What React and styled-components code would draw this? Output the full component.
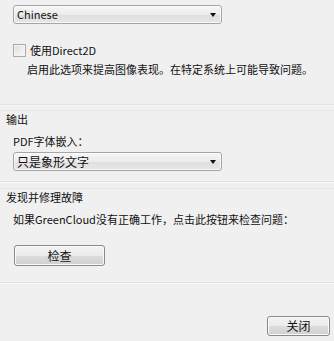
import React from 'react';
import styled, { createGlobalStyle } from 'styled-components';

const GlobalStyle = createGlobalStyle`
  html, body {
    margin: 0;
    padding: 0;
    background: #f0f0f0;
  }
  body {
    font-family: "Noto Sans CJK SC", "Liberation Sans", sans-serif;
    font-size: 11px;
    color: #111;
  }
`;

const Page = styled.div`
  width: 334px;
  height: 341px;
  overflow: hidden;
  background: #f0f0f0;
  display: flex;
  flex-direction: column;
`;

const Section = styled.section`
  display: flex;
  flex-direction: column;
  align-items: flex-start;
  padding: ${p => p.$pad || '0'};
  height: ${p => p.$h}px;
  box-sizing: border-box;
`;

const Separator = styled.div`
  height: 1px;
  background: #e1e1e1;
  border-bottom: 1px solid #f9f9f9;
  flex-shrink: 0;
`;

const Header = styled.div`
  align-self: stretch;
  position: relative;
  line-height: 14px;
  padding-left: 6px;
  color: #111;
  &::before {
    content: '';
    position: absolute;
    left: 0;
    right: 0;
    top: -2px;
    height: 1px;
    background: #e6e6e6;
  }
`;

const Text = styled.div`
  line-height: 14px;
  margin-top: ${p => p.$mt || 0}px;
  margin-left: ${p => p.$ml || 13}px;
  white-space: nowrap;
`;

const Select = styled.div`
  width: 209px;
  height: 19px;
  box-sizing: border-box;
  margin-left: 13px;
  margin-top: ${p => p.$mt || 0}px;
  border: 1px solid #a5a5a5;
  border-radius: 3px;
  background: linear-gradient(#f6f6f6 0%, #ececec 50%, #dfdfdf 51%, #e6e6e6 100%);
  display: flex;
  align-items: center;
  justify-content: space-between;
  padding: 0 5px 0 3px;
  line-height: 17px;
  font-size: ${p => p.$size || 11}px;
  box-shadow: inset 0 0 0 1px rgba(255,255,255,0.7);
`;

const Arrow = styled.span`
  width: 0;
  height: 0;
  border-left: 3px solid transparent;
  border-right: 3px solid transparent;
  border-top: 4px solid #111;
`;

const CheckRow = styled.label`
  display: flex;
  align-items: center;
  gap: 4px;
  margin-left: 13px;
  margin-top: ${p => p.$mt || 0}px;
  line-height: 14px;
`;

const Box = styled.span`
  width: 13px;
  height: 13px;
  box-sizing: border-box;
  border: 1px solid #a9a9a9;
  background: linear-gradient(135deg, #dedede, #f8f8f8);
  box-shadow: inset 0 0 0 1px #f4f4f4;
`;

const Button = styled.button`
  width: ${p => p.$w}px;
  height: ${p => p.$h}px;
  box-sizing: border-box;
  margin-left: ${p => p.$ml || 0}px;
  margin-top: ${p => p.$mt || 0}px;
  border: 1px solid #8a8a8a;
  border-radius: 3px;
  background: linear-gradient(#f3f3f3 0%, #ebebeb 50%, #dddddd 51%, #d0d0d0 100%);
  box-shadow: inset 0 0 0 1px #fafafa;
  font-family: inherit;
  font-size: 12px;
  color: #111;
  padding: 0;
  line-height: 1;
`;

const Footer = styled.div`
  flex: 1;
  display: flex;
  justify-content: flex-end;
  align-items: flex-start;
  padding: 32px 4px 0 0;
`;

export default function App() {
  return (
    <Page>
      <GlobalStyle />
      <Section $h={104} $pad="5px 0 0 0">
        <Select>
          <span>Chinese</span>
          <Arrow />
        </Select>
        <CheckRow $mt={19}>
          <Box />
          <span>使用Direct2D</span>
        </CheckRow>
        <Text $ml={27} $mt={5}>启用此选项来提高图像表现。在特定系统上可能导致问题。</Text>
      </Section>
      <Separator />
      <Section $h={75} $pad="6px 0 0 0">
        <Header>输出</Header>
        <Text $mt={8}>PDF字体嵌入：</Text>
        <Select $mt={4} $size={12}>
          <span>只是象形文字</span>
          <Arrow />
        </Select>
      </Section>
      <Separator />
      <Section $h={99} $pad="7px 0 0 0">
        <Header>发现并修理故障</Header>
        <Text $mt={8}>如果GreenCloud没有正确工作，点击此按钮来检查问题：</Text>
        <Button $w={91} $h={21} $ml={14} $mt={19}>检查</Button>
      </Section>
      <Separator />
      <Footer>
        <Button $w={63} $h={20}>关闭</Button>
      </Footer>
    </Page>
  );
}
